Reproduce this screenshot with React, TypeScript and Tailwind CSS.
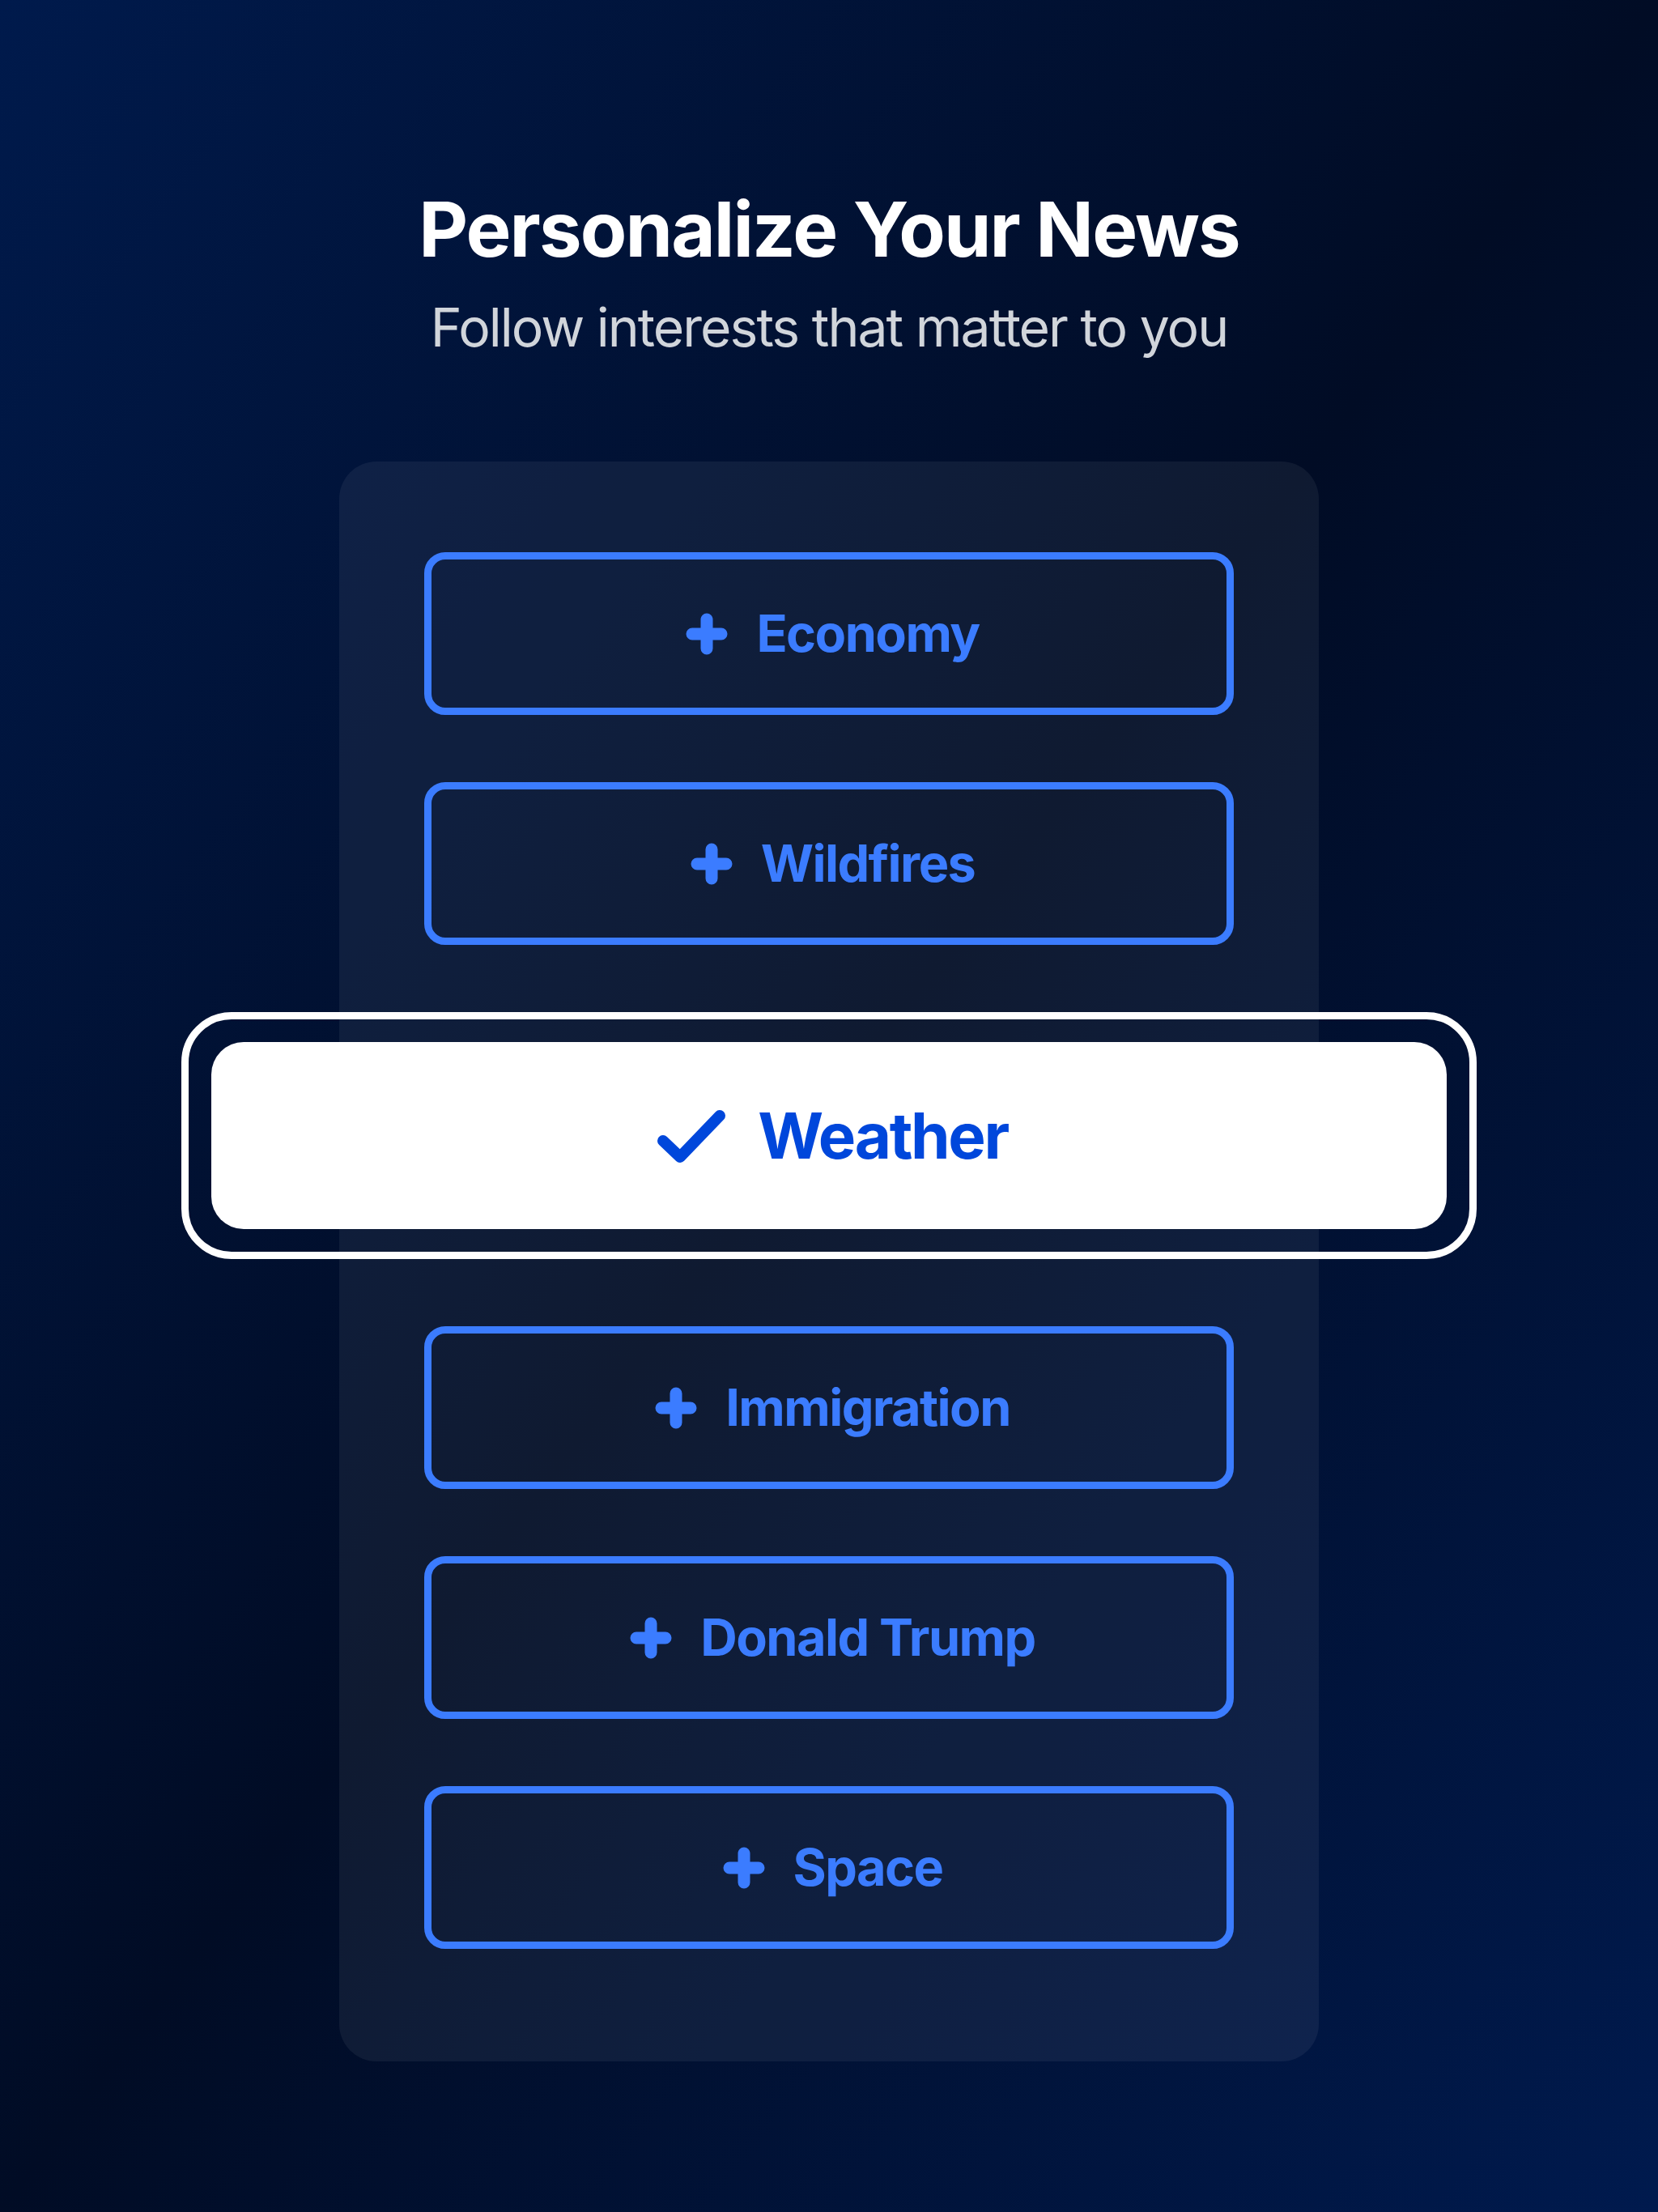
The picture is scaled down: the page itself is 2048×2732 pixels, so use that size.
import React from "react";

const topics = ["Economy", "Wildfires", "Weather", "Immigration", "Donald Trump", "Space"];
const selected = "Weather";

function PlusIcon() {
  return (
    <svg width="52" height="52" viewBox="0 0 52 52" fill="none" aria-hidden="true">
      <path d="M26 8v36M8 26h36" stroke="currentColor" strokeWidth="15" strokeLinecap="round" />
    </svg>
  );
}

function CheckIcon() {
  return (
    <svg width="86" height="66" viewBox="0 0 86 66" fill="none" aria-hidden="true">
      <path
        d="M8 39L29 59L78 8"
        stroke="currentColor"
        strokeWidth="14"
        strokeLinecap="round"
        strokeLinejoin="round"
      />
    </svg>
  );
}

function TopicButton({ label }: { label: string }) {
  return (
    <button
      type="button"
      className="flex h-[201px] w-full items-center justify-center gap-[35px] rounded-[26px] border-[9px] border-[#3b7cff] pl-[9px] text-[#3b7cff]"
    >
      <PlusIcon />
      <span className="text-[63px] font-bold leading-none tracking-[-0.025em]">{label}</span>
    </button>
  );
}

function SelectedTopic({ label }: { label: string }) {
  return (
    <div className="-mx-[300px] rounded-[62px] border-[9px] border-white p-[28px]">
      <button
        type="button"
        className="flex h-[231px] w-full items-center justify-center gap-[39px] rounded-[40px] bg-white pl-[8px] text-[#0047db]"
      >
        <CheckIcon />
        <span className="text-[78px] font-bold leading-none tracking-[-0.03em]">{label}</span>
      </button>
    </div>
  );
}

export default function App() {
  return (
    <div
      className="flex min-h-[2732px] w-full flex-col items-center bg-linear-to-br from-[#001a4c] via-[#010c25] to-[#001a4e] pt-[236px]"
      style={{ fontFamily: "Inter, 'Noto Sans', sans-serif" }}
    >
      <h1 className="text-[94px] font-bold leading-none tracking-[-0.02em] text-white">
        Personalize Your News
      </h1>
      <p className="mt-[41px] text-[66px] font-normal leading-none tracking-[-0.03em] text-[#d1d5db]">
        Follow interests that matter to you
      </p>

      <div className="mt-[133px] flex w-[1210px] flex-col gap-[83px] rounded-[46px] bg-white/[0.06] px-[105px] pb-[139px] pt-[112px]">
        {topics.map((t) =>
          t === selected ? <SelectedTopic key={t} label={t} /> : <TopicButton key={t} label={t} />
        )}
      </div>
    </div>
  );
}
